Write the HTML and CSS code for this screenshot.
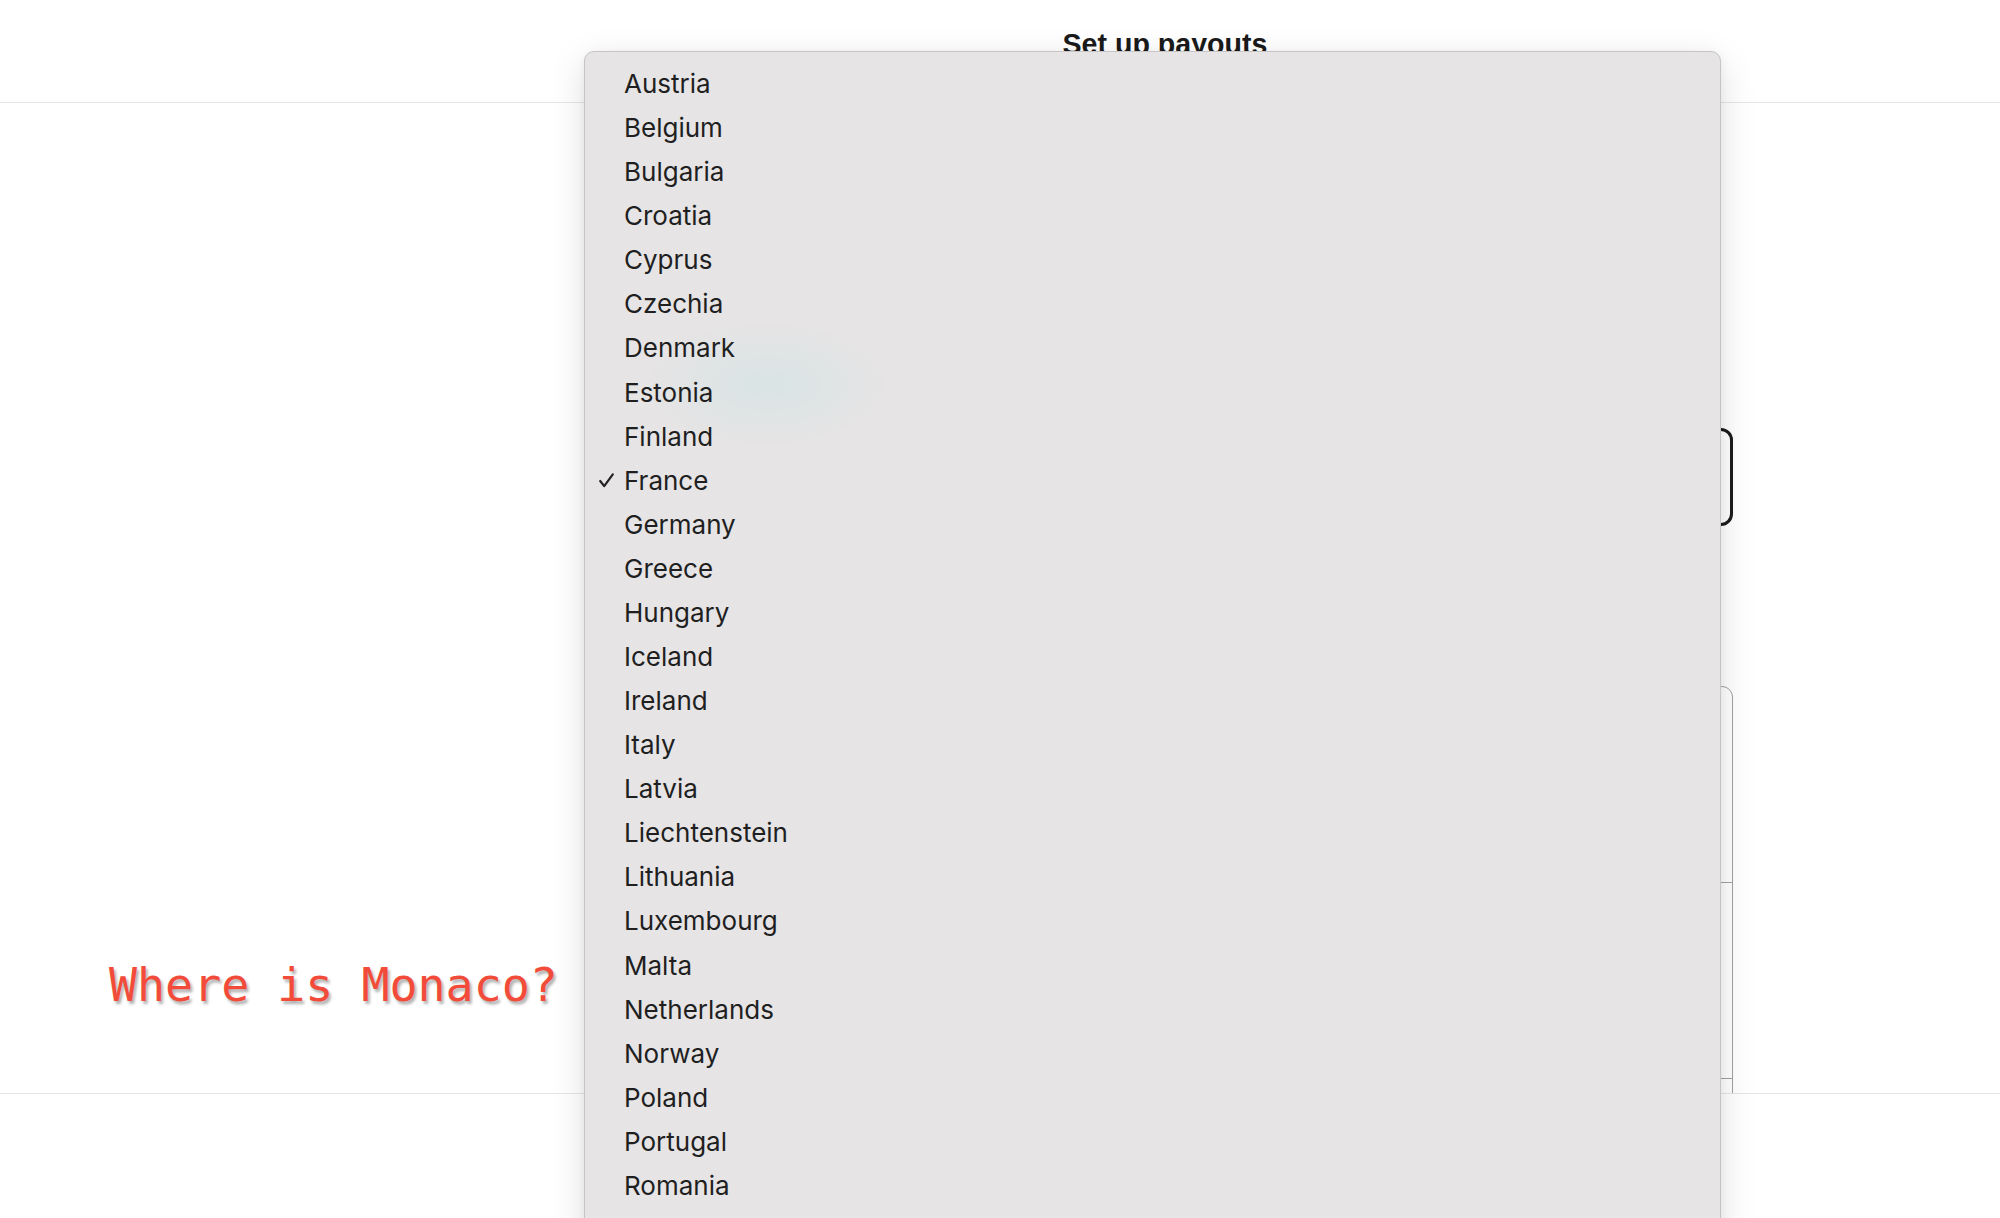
FILE: index.html
```html
<!DOCTYPE html>
<html lang="en">
<head>
<meta charset="utf-8">
<title>Set up payouts</title>
<link rel="stylesheet" href="styles.css">
</head>
<body>
<div class="page">
  <header class="topbar">
    <div class="side"></div>
    <h1 class="title">Set up payouts</h1>
  </header>
  <main class="main">
    <div class="side"></div>
    <div class="center">
      <div class="column">
        <div class="select-box"></div>
        <div class="card">
          <div class="card-row"></div>
          <div class="card-row"></div>
          <div class="card-row"></div>
        </div>
      </div>
    </div>
  </main>
  <footer class="footer"></footer>
</div>

<div class="annotation">Where is Monaco?</div>

<div class="menu">
  <ul class="menu-list">
    <li class="item">Austria</li>
    <li class="item">Belgium</li>
    <li class="item">Bulgaria</li>
    <li class="item">Croatia</li>
    <li class="item">Cyprus</li>
    <li class="item">Czechia</li>
    <li class="item">Denmark</li>
    <li class="item">Estonia</li>
    <li class="item">Finland</li>
    <li class="item checked"><svg class="check" viewBox="0 0 15 15" width="15" height="15"><polyline points="1.2,8 5.2,13.2 13.8,1.4" fill="none" stroke="#222" stroke-width="2.2" stroke-linecap="round" stroke-linejoin="round"/></svg>France</li>
    <li class="item">Germany</li>
    <li class="item">Greece</li>
    <li class="item">Hungary</li>
    <li class="item">Iceland</li>
    <li class="item">Ireland</li>
    <li class="item">Italy</li>
    <li class="item">Latvia</li>
    <li class="item">Liechtenstein</li>
    <li class="item">Lithuania</li>
    <li class="item">Luxembourg</li>
    <li class="item">Malta</li>
    <li class="item">Netherlands</li>
    <li class="item">Norway</li>
    <li class="item">Poland</li>
    <li class="item">Portugal</li>
    <li class="item">Romania</li>
  </ul>
</div>
</body>
</html>
```

FILE: styles.css
```css
html, body {
  margin: 0;
  padding: 0;
  background: #ffffff;
}
body {
  width: 2000px;
  height: 1218px;
  overflow: hidden;
  position: relative;
  font-family: "Liberation Sans", Arial, sans-serif;
  color: #1c1c1c;
}
.page {
  display: flex;
  flex-direction: column;
  height: 1218px;
}
.topbar {
  height: 102px;
  flex: none;
  display: grid;
  grid-template-columns: 330px 1fr;
  border-bottom: 1px solid #e6e6e6;
}
.title {
  margin: 0;
  padding-top: 28px;
  text-align: center;
  font-size: 28.6px;
  line-height: 32px;
  font-weight: 700;
  color: #1a1a1a;
}
.main {
  flex: none;
  height: 990px;
  overflow: hidden;
  display: grid;
  grid-template-columns: 330px 1fr;
}
.center {
  display: flex;
  justify-content: center;
}
.column {
  width: 1135px;
  padding-top: 325px;
  display: flex;
  flex-direction: column;
  gap: 160px;
}
.select-box {
  height: 92px;
  border: 3px solid #1b1b1b;
  border-radius: 12px;
}
.card {
  border: 1.3px solid #a2a2a2;
  border-radius: 11px;
  display: flex;
  flex-direction: column;
}
.card-row {
  height: 195px;
  flex: none;
  border-bottom: 1.3px solid #a2a2a2;
}
.footer {
  flex: 1;
  border-top: 1px solid #e6e6e6;
}
.annotation {
  position: absolute;
  left: 109px;
  top: 962px;
  font-family: "DejaVu Sans Mono", "Liberation Mono", monospace;
  font-size: 46.6px;
  line-height: 46px;
  color: #f24b39;
  text-shadow: 2px 3px 3px rgba(0, 0, 0, 0.32);
  white-space: nowrap;
}
.menu {
  position: absolute;
  left: 584px;
  top: 51px;
  width: 1137px;
  height: 1240px;
  box-sizing: border-box;
  border: 1px solid #c6c4c5;
  border-radius: 10px;
  background-color: #e6e4e5;
  background-image: radial-gradient(ellipse 120px 62px at 182px 332px, rgba(214, 228, 228, 0.85), rgba(214, 228, 228, 0));
  box-shadow: 0 10px 36px rgba(0, 0, 0, 0.13), 0 2px 8px rgba(0, 0, 0, 0.05);
  overflow: hidden;
}
.menu-list {
  list-style: none;
  margin: 0;
  padding: 10px 0 0 0;
}
.item {
  position: relative;
  height: 44.08px;
  line-height: 44.08px;
  padding-left: 39px;
  font-family: Inter, "Noto Sans", sans-serif;
  font-size: 26px;
  color: #1f1f1f;
  white-space: nowrap;
}
.check {
  position: absolute;
  left: 14px;
  top: 14px;
}
```
